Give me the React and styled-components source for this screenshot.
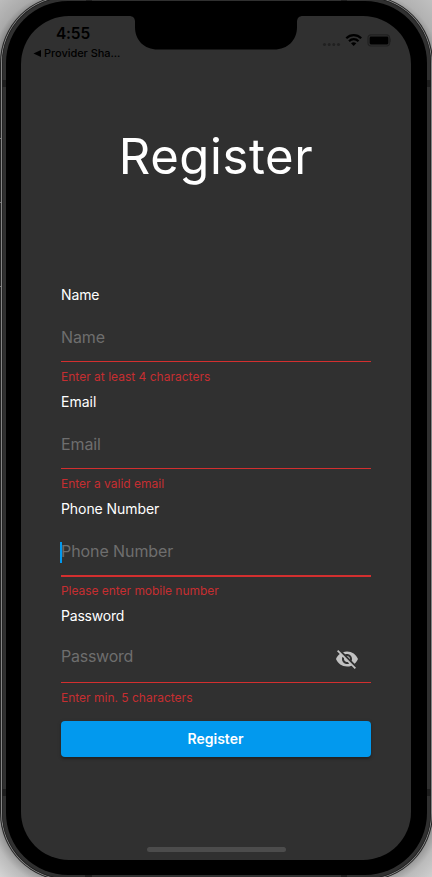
import React from "react";
import styled, { createGlobalStyle } from "styled-components";

const GlobalStyle = createGlobalStyle`
  *, *::before, *::after { box-sizing: border-box; }
  html, body { margin: 0; padding: 0; overflow: hidden; }
  body { font-family: Inter, "Liberation Sans", sans-serif; }
`;

const Stage = styled.div`
  width: 432px;
  height: 877px;
  overflow: hidden;
  background:
    radial-gradient(circle at 66px 66px, #777 64px, #aaa 74px, #c0c0c0 98px) 0 0 / 216px 438px no-repeat,
    radial-gradient(circle at 150px 66px, #888 64px, #b2b2b2 74px, #c4c4c4 98px) 216px 0 / 216px 438px no-repeat,
    radial-gradient(circle at 66px 374px, #808080 62px, #bbb 76px, #ddd 98px) 0 438px / 216px 439px no-repeat,
    radial-gradient(circle at 150px 374px, #808080 62px, #bbb 76px, #d6d6d6 98px) 216px 438px / 216px 439px no-repeat;
`;

const Rim = styled.div`
  position: relative;
  width: 433px;
  height: 886px;
  margin-top: -5px;
  padding: 1px;
  border-radius: 68px;
  background: #242424;
`;

const Highlight = styled.div`
  height: 100%;
  padding: 1px;
  border-radius: 67px;
  background: #858585;
`;

const Band = styled.div`
  height: 100%;
  padding: 4px;
  border-radius: 66px;
  background: #303030;
  box-shadow: inset 0 0 0 0.5px #161616;
`;

const Bezel = styled.div`
  height: 100%;
  padding: 15px 16px 15px 15px;
  border-radius: 62px;
  background: #000;
`;

const Seam = styled.i`
  position: absolute;
  left: ${(p) => p.$x}px;
  top: ${(p) => p.$y}px;
  width: ${(p) => p.$w}px;
  height: ${(p) => p.$h}px;
  background: ${(p) => p.$tone || "#1e1e1e"};
`;

const Screen = styled.main`
  position: relative;
  width: 390px;
  height: 844px;
  overflow: hidden;
  border-radius: 48px;
  background: #303030;
  display: flex;
  flex-direction: column;
  align-items: center;
`;

const Notch = styled.svg`
  position: absolute;
  left: 108px;
  top: 0;
`;

const StatusBar = styled.header`
  width: 100%;
  height: 50px;
  padding: 8px 20px 0 12px;
  display: flex;
  justify-content: space-between;
  align-items: flex-start;
  color: #000;
`;

const TimeGroup = styled.div`
  display: flex;
  flex-direction: column;
`;

const Time = styled.span`
  margin-left: 23px;
  font-size: 15.5px;
  line-height: 20px;
  font-weight: 600;
  letter-spacing: -0.2px;
`;

const BackLink = styled.span`
  display: flex;
  align-items: center;
  gap: 3px;
  margin-top: 1px;
  font-size: 11px;
  line-height: 16px;
  font-weight: 500;
  letter-spacing: -0.05px;
  white-space: nowrap;
`;

const StatusIcons = styled.svg`
  margin-top: 9px;
`;

const Title = styled.h1`
  margin: 61px 0 0;
  height: 60px;
  font-size: 49px;
  line-height: 60px;
  font-weight: 400;
  letter-spacing: 0.6px;
  color: #fff;
`;

const Form = styled.form`
  width: 310px;
  margin-top: 98px;
  display: flex;
  flex-direction: column;
`;

const Field = styled.div`
  height: 107px;
  display: flex;
  flex-direction: column;
`;

const Label = styled.label`
  height: 20px;
  font-size: 14px;
  line-height: 20px;
  letter-spacing: ${(p) => p.$track}px;
  color: #fff;
`;

const InputRow = styled.div`
  position: relative;
  height: ${(p) => (p.$focused ? 58 : 57)}px;
  padding: ${(p) => (p.$raised ? 18 : 20)}px 12px 0 0;
  display: flex;
  justify-content: space-between;
  align-items: flex-start;
  border-bottom: ${(p) => (p.$focused ? "2px" : "1px")} solid #d32f2f;
  margin-bottom: ${(p) => (p.$focused ? "-1px" : "0")};
`;

const Hint = styled.span`
  font-size: 16px;
  line-height: 24px;
  letter-spacing: ${(p) => p.$track}px;
  color: #6e6e6e;
`;

const Caret = styled.i`
  position: absolute;
  left: -1px;
  top: 23px;
  width: 2px;
  height: 21px;
  background: #0299ee;
`;

const ErrorText = styled.span`
  margin-top: 7px;
  font-size: 12px;
  line-height: 16px;
  letter-spacing: ${(p) => p.$track}px;
  color: #c62e31;
`;

const SubmitButton = styled.button`
  width: 310px;
  height: 36px;
  margin-top: 8px;
  padding: 0 1px 0 0;
  border: 0;
  border-radius: 4px;
  background: #0299ee;
  box-shadow: 0 2px 2px rgba(0, 0, 0, 0.22), 0 1px 4px rgba(0, 0, 0, 0.16);
  color: #fff;
  font: 600 14px/36px Inter, "Liberation Sans", sans-serif;
  letter-spacing: 0;
`;

const HomeIndicator = styled.div`
  width: 139px;
  height: 5px;
  margin-top: auto;
  margin-bottom: 8px;
  flex-shrink: 0;
  border-radius: 3px;
  background: #4c4c4c;
`;

const EyeOff = styled.svg`
  margin-top: 3px;
`;

const fields = [
  { name: "Name", error: "Enter at least 4 characters", lt: -0.1, ht: -0.1, et: 0.01 },
  { name: "Email", error: "Enter a valid email", lt: 0, ht: -0.1, et: 0 },
  { name: "Phone Number", error: "Please enter mobile number", lt: -0.07, ht: -0.08, et: -0.04, focused: true },
  { name: "Password", error: "Enter min. 5 characters", lt: -0.2, ht: -0.25, et: 0, secret: true },
];

const seams = [
  { $x: 2, $y: 85, $w: 4, $h: 7 },
  { $x: 427, $y: 85, $w: 4, $h: 7 },
  { $x: 2, $y: 794, $w: 4, $h: 7 },
  { $x: 427, $y: 794, $w: 4, $h: 7 },
  { $x: 86, $y: 5, $w: 6, $h: 1 },
  { $x: 341, $y: 5, $w: 6, $h: 1 },
  { $x: 85, $y: 880, $w: 7, $h: 2 },
  { $x: 341, $y: 880, $w: 6, $h: 2 },
  { $x: 0, $y: 143, $w: 1, $h: 1, $tone: "#777" },
  { $x: 0, $y: 207, $w: 1, $h: 1, $tone: "#777" },
  { $x: 0, $y: 291, $w: 1, $h: 1, $tone: "#777" },
];

export default function App() {
  return (
    <>
      <GlobalStyle />
      <Stage>
        <Rim>
          <Highlight>
            <Band>
              <Bezel>
                <Screen>
                  <Notch width="174" height="34" viewBox="0 0 174 34">
                    <path d="M0 0C4 0 6 2 6 6V11C6 24 15 33.5 29 33.5H145C159 33.5 168 24 168 11V6C168 2 170 0 174 0Z" fill="#000" />
                  </Notch>
                  <StatusBar>
                    <TimeGroup>
                      <Time>4:55</Time>
                      <BackLink>
                        <svg width="8" height="7" viewBox="0 0 8 7"><path d="M8 0V7L0.5 3.5Z" fill="#000" /></svg>
                        Provider Sha...
                      </BackLink>
                    </TimeGroup>
                    <StatusIcons width="70" height="16" viewBox="0 0 70 16">
                      <g fill="#202020">
                        <circle cx="3.5" cy="11.5" r="1.5" /><circle cx="8.2" cy="11.5" r="1.5" />
                        <circle cx="12.8" cy="11.5" r="1.5" /><circle cx="17.5" cy="11.5" r="1.5" />
                      </g>
                      <g fill="none" stroke="#000" strokeWidth="2.2">
                        <path d="M25.3 5.2C29.5 1 36 1 40.2 5.2" />
                        <path d="M28 8.2C30.8 5.4 34.7 5.4 37.5 8.2" />
                      </g>
                      <path d="M30 10.2C31.6 8.8 33.7 8.8 35.3 10.2L32.65 12.9Z" fill="#000" />
                      <rect x="47" y="1.8" width="21.6" height="11.2" rx="3.2" fill="none" stroke="#202020" strokeWidth="1.2" />
                      <rect x="48.6" y="3.6" width="18.8" height="7.8" rx="1.3" fill="#000" />
                      <path d="M69.3 5.2V9.6Q71.8 7.4 69.3 5.2Z" fill="#202020" />
                    </StatusIcons>
                  </StatusBar>
                  <Title>Register</Title>
                  <Form onSubmit={(e) => e.preventDefault()}>
                    {fields.map((f) => (
                      <Field key={f.name}>
                        <Label $track={f.lt}>{f.name}</Label>
                        <InputRow $focused={f.focused} $raised={f.secret}>
                          <Hint $track={f.ht}>{f.name}</Hint>
                          {f.focused && <Caret />}
                          {f.secret && (
                            <EyeOff width="24" height="24" viewBox="0 0 24 24">
                              <path
                                fill="#c1c1c1"
                                d="M12 7c2.76 0 5 2.24 5 5 0 .65-.13 1.26-.36 1.83l2.92 2.92c1.51-1.26 2.7-2.89 3.43-4.75-1.73-4.39-6-7.5-11-7.5-1.4 0-2.74.25-3.98.7l2.16 2.16C10.74 7.13 11.35 7 12 7zM2 4.27l2.28 2.28.46.46C3.08 8.3 1.78 10.02 1 12c1.73 4.39 6 7.5 11 7.5 1.55 0 3.03-.3 4.38-.84l.42.42L19.73 22 21 20.73 3.27 3 2 4.27zM7.53 9.8l1.55 1.55c-.05.21-.08.43-.08.65 0 1.66 1.34 3 3 3 .22 0 .44-.03.65-.08l1.55 1.55c-.67.33-1.41.53-2.2.53-2.76 0-5-2.24-5-5 0-.79.2-1.53.53-2.2zm4.31-.78l3.15 3.15.02-.16c0-1.66-1.34-3-3-3l-.17.01z"
                              />
                            </EyeOff>
                          )}
                        </InputRow>
                        <ErrorText $track={f.et}>{f.error}</ErrorText>
                      </Field>
                    ))}
                    <SubmitButton type="submit">Register</SubmitButton>
                  </Form>
                  <HomeIndicator />
                </Screen>
              </Bezel>
            </Band>
          </Highlight>
          {seams.map((s, i) => <Seam key={i} {...s} />)}
        </Rim>
      </Stage>
    </>
  );
}
